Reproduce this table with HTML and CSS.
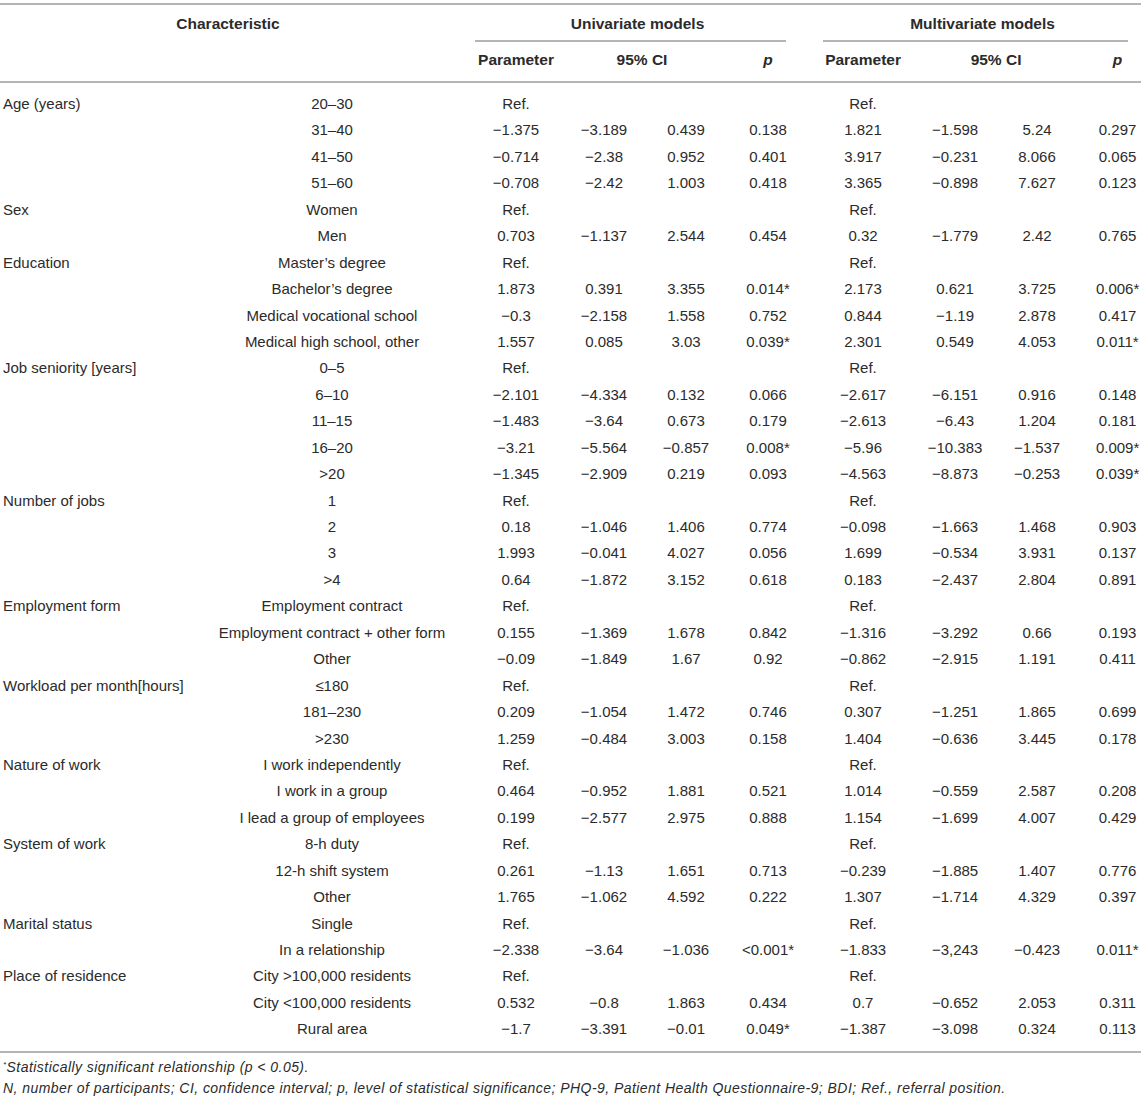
FILE: index.html
```html
<!DOCTYPE html>
<html lang="en">
<head>
<meta charset="utf-8">
<title>Table</title>
<link rel="stylesheet" href="styles.css">
</head>
<body>
<div class="page">
<table class="stats">
  <colgroup>
    <col class="w-char"><col class="w-sub"><col class="w-par"><col class="w-lo"><col class="w-hi"><col class="w-p">
    <col class="w-par2"><col class="w-lo2"><col class="w-hi2"><col class="w-p2">
  </colgroup>
  <thead>
    <tr class="h-group">
      <th colspan="2" class="h-char">Characteristic</th>
      <th colspan="4" class="h-span"><div class="grp grp-uni">Univariate models</div></th>
      <th colspan="4" class="h-span"><div class="grp grp-multi">Multivariate models</div></th>
    </tr>
    <tr class="h-sub">
      <th colspan="2"></th>
      <th>Parameter</th><th colspan="2">95% CI</th><th class="it">p</th>
      <th>Parameter</th><th colspan="2">95% CI</th><th class="it last">p</th>
    </tr>
  </thead>
  <tbody>
    <tr class="first"><td class="c1">Age (years)</td><td>20–30</td><td>Ref.</td><td></td><td></td><td></td><td>Ref.</td><td></td><td></td><td class="last"></td></tr>
    <tr><td class="c1"></td><td>31–40</td><td>−1.375</td><td>−3.189</td><td>0.439</td><td>0.138</td><td>1.821</td><td>−1.598</td><td>5.24</td><td class="last">0.297</td></tr>
    <tr><td class="c1"></td><td>41–50</td><td>−0.714</td><td>−2.38</td><td>0.952</td><td>0.401</td><td>3.917</td><td>−0.231</td><td>8.066</td><td class="last">0.065</td></tr>
    <tr><td class="c1"></td><td>51–60</td><td>−0.708</td><td>−2.42</td><td>1.003</td><td>0.418</td><td>3.365</td><td>−0.898</td><td>7.627</td><td class="last">0.123</td></tr>
    <tr><td class="c1">Sex</td><td>Women</td><td>Ref.</td><td></td><td></td><td></td><td>Ref.</td><td></td><td></td><td class="last"></td></tr>
    <tr><td class="c1"></td><td>Men</td><td>0.703</td><td>−1.137</td><td>2.544</td><td>0.454</td><td>0.32</td><td>−1.779</td><td>2.42</td><td class="last">0.765</td></tr>
    <tr><td class="c1">Education</td><td>Master’s degree</td><td>Ref.</td><td></td><td></td><td></td><td>Ref.</td><td></td><td></td><td class="last"></td></tr>
    <tr><td class="c1"></td><td>Bachelor’s degree</td><td>1.873</td><td>0.391</td><td>3.355</td><td>0.014*</td><td>2.173</td><td>0.621</td><td>3.725</td><td class="last">0.006*</td></tr>
    <tr><td class="c1"></td><td>Medical vocational school</td><td>−0.3</td><td>−2.158</td><td>1.558</td><td>0.752</td><td>0.844</td><td>−1.19</td><td>2.878</td><td class="last">0.417</td></tr>
    <tr><td class="c1"></td><td>Medical high school, other</td><td>1.557</td><td>0.085</td><td>3.03</td><td>0.039*</td><td>2.301</td><td>0.549</td><td>4.053</td><td class="last">0.011*</td></tr>
    <tr><td class="c1">Job seniority [years]</td><td>0–5</td><td>Ref.</td><td></td><td></td><td></td><td>Ref.</td><td></td><td></td><td class="last"></td></tr>
    <tr><td class="c1"></td><td>6–10</td><td>−2.101</td><td>−4.334</td><td>0.132</td><td>0.066</td><td>−2.617</td><td>−6.151</td><td>0.916</td><td class="last">0.148</td></tr>
    <tr><td class="c1"></td><td>11–15</td><td>−1.483</td><td>−3.64</td><td>0.673</td><td>0.179</td><td>−2.613</td><td>−6.43</td><td>1.204</td><td class="last">0.181</td></tr>
    <tr><td class="c1"></td><td>16–20</td><td>−3.21</td><td>−5.564</td><td>−0.857</td><td>0.008*</td><td>−5.96</td><td>−10.383</td><td>−1.537</td><td class="last">0.009*</td></tr>
    <tr><td class="c1"></td><td>&gt;20</td><td>−1.345</td><td>−2.909</td><td>0.219</td><td>0.093</td><td>−4.563</td><td>−8.873</td><td>−0.253</td><td class="last">0.039*</td></tr>
    <tr><td class="c1">Number of jobs</td><td>1</td><td>Ref.</td><td></td><td></td><td></td><td>Ref.</td><td></td><td></td><td class="last"></td></tr>
    <tr><td class="c1"></td><td>2</td><td>0.18</td><td>−1.046</td><td>1.406</td><td>0.774</td><td>−0.098</td><td>−1.663</td><td>1.468</td><td class="last">0.903</td></tr>
    <tr><td class="c1"></td><td>3</td><td>1.993</td><td>−0.041</td><td>4.027</td><td>0.056</td><td>1.699</td><td>−0.534</td><td>3.931</td><td class="last">0.137</td></tr>
    <tr><td class="c1"></td><td>&gt;4</td><td>0.64</td><td>−1.872</td><td>3.152</td><td>0.618</td><td>0.183</td><td>−2.437</td><td>2.804</td><td class="last">0.891</td></tr>
    <tr><td class="c1">Employment form</td><td>Employment contract</td><td>Ref.</td><td></td><td></td><td></td><td>Ref.</td><td></td><td></td><td class="last"></td></tr>
    <tr><td class="c1"></td><td>Employment contract + other form</td><td>0.155</td><td>−1.369</td><td>1.678</td><td>0.842</td><td>−1.316</td><td>−3.292</td><td>0.66</td><td class="last">0.193</td></tr>
    <tr><td class="c1"></td><td>Other</td><td>−0.09</td><td>−1.849</td><td>1.67</td><td>0.92</td><td>−0.862</td><td>−2.915</td><td>1.191</td><td class="last">0.411</td></tr>
    <tr><td class="c1">Workload per month[hours]</td><td>≤180</td><td>Ref.</td><td></td><td></td><td></td><td>Ref.</td><td></td><td></td><td class="last"></td></tr>
    <tr><td class="c1"></td><td>181–230</td><td>0.209</td><td>−1.054</td><td>1.472</td><td>0.746</td><td>0.307</td><td>−1.251</td><td>1.865</td><td class="last">0.699</td></tr>
    <tr><td class="c1"></td><td>&gt;230</td><td>1.259</td><td>−0.484</td><td>3.003</td><td>0.158</td><td>1.404</td><td>−0.636</td><td>3.445</td><td class="last">0.178</td></tr>
    <tr><td class="c1">Nature of work</td><td>I work independently</td><td>Ref.</td><td></td><td></td><td></td><td>Ref.</td><td></td><td></td><td class="last"></td></tr>
    <tr><td class="c1"></td><td>I work in a group</td><td>0.464</td><td>−0.952</td><td>1.881</td><td>0.521</td><td>1.014</td><td>−0.559</td><td>2.587</td><td class="last">0.208</td></tr>
    <tr><td class="c1"></td><td>I lead a group of employees</td><td>0.199</td><td>−2.577</td><td>2.975</td><td>0.888</td><td>1.154</td><td>−1.699</td><td>4.007</td><td class="last">0.429</td></tr>
    <tr><td class="c1">System of work</td><td>8-h duty</td><td>Ref.</td><td></td><td></td><td></td><td>Ref.</td><td></td><td></td><td class="last"></td></tr>
    <tr><td class="c1"></td><td>12-h shift system</td><td>0.261</td><td>−1.13</td><td>1.651</td><td>0.713</td><td>−0.239</td><td>−1.885</td><td>1.407</td><td class="last">0.776</td></tr>
    <tr><td class="c1"></td><td>Other</td><td>1.765</td><td>−1.062</td><td>4.592</td><td>0.222</td><td>1.307</td><td>−1.714</td><td>4.329</td><td class="last">0.397</td></tr>
    <tr><td class="c1">Marital status</td><td>Single</td><td>Ref.</td><td></td><td></td><td></td><td>Ref.</td><td></td><td></td><td class="last"></td></tr>
    <tr><td class="c1"></td><td>In a relationship</td><td>−2.338</td><td>−3.64</td><td>−1.036</td><td>&lt;0.001*</td><td>−1.833</td><td>−3,243</td><td>−0.423</td><td class="last">0.011*</td></tr>
    <tr><td class="c1">Place of residence</td><td>City &gt;100,000 residents</td><td>Ref.</td><td></td><td></td><td></td><td>Ref.</td><td></td><td></td><td class="last"></td></tr>
    <tr><td class="c1"></td><td>City &lt;100,000 residents</td><td>0.532</td><td>−0.8</td><td>1.863</td><td>0.434</td><td>0.7</td><td>−0.652</td><td>2.053</td><td class="last">0.311</td></tr>
    <tr class="lastrow"><td class="c1"></td><td>Rural area</td><td>−1.7</td><td>−3.391</td><td>−0.01</td><td>0.049*</td><td>−1.387</td><td>−3.098</td><td>0.324</td><td class="last">0.113</td></tr>
  </tbody>
</table>
<div class="notes">
  <p><sup>*</sup>Statistically significant relationship (p &lt; 0.05).</p>
  <p>N, number of participants; CI, confidence interval; p, level of statistical significance; PHQ-9, Patient Health Questionnaire-9; BDI; Ref., referral position.</p>
</div>
</div>
</body>
</html>
```

FILE: styles.css
```css
html, body {
  margin: 0;
  padding: 0;
  background: #ffffff;
}

.page {
  padding-top: 3px;
  width: 1141px;
  font-family: "Liberation Sans", Arial, sans-serif;
  color: #2b2b2b;
}

.stats {
  width: 1141px;
  table-layout: fixed;
  border-collapse: collapse;
  border-top: 2px solid #b4b4b4;
  border-bottom: 2px solid #b4b4b4;
  font-size: 15px;
}

.w-char { width: 192px; }
.w-sub { width: 280px; }
.w-par { width: 88px; }
.w-lo { width: 88px; }
.w-hi { width: 76px; }
.w-p { width: 88px; }
.w-par2 { width: 102px; }
.w-lo2 { width: 82px; }
.w-hi2 { width: 82px; }
.w-p2 { width: 63px; }

.stats th {
  font-weight: bold;
  font-size: 15.5px;
  line-height: 18px;
  text-align: center;
  white-space: nowrap;
  padding: 0;
}

.h-group th {
  vertical-align: top;
}

.h-char {
  padding: 10px 16px 0 0 !important;
}

.grp {
  padding: 10px 0 7px 14px;
  border-bottom: 2px solid #b4b4b4;
}

.grp-uni {
  margin: 0 26px 0 3px;
}

.grp-multi {
  margin: 0 13px 0 11px;
}

.h-sub th {
  padding: 9px 0 12px 0;
  border-bottom: 2px solid #b4b4b4;
}

.stats th.it {
  font-style: italic;
}

.stats td {
  padding: 0;
  height: 26.43px;
  line-height: 26.43px;
  text-align: center;
  white-space: nowrap;
  vertical-align: middle;
}

.stats td.c1 {
  text-align: left;
  padding-left: 3px;
}

.stats .last {
  padding-left: 16px;
}

.stats tr.first td {
  padding-top: 8px;
}

.stats tr.lastrow td {
  padding-bottom: 8px;
}

.notes {
  margin-top: 4px;
  padding-left: 3px;
  font-style: italic;
  font-size: 14px;
  letter-spacing: 0.45px;
  line-height: 21px;
}

.notes p {
  margin: 0;
}

.notes sup {
  font-size: 8px;
  vertical-align: 5px;
  line-height: 0;
}
```
